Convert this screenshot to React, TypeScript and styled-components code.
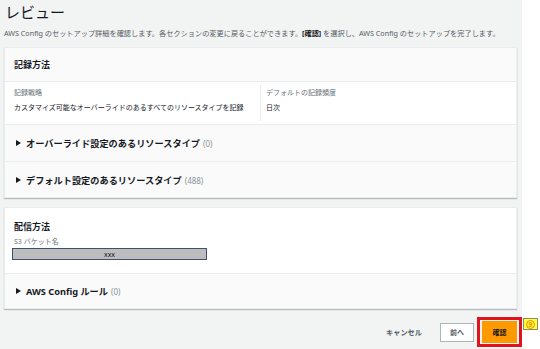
import React from 'react';
import styled, { createGlobalStyle } from 'styled-components';

const GlobalStyle = createGlobalStyle`
  html, body {
    margin: 0;
    padding: 0;
    background: #ffffff;
  }
  body {
    font-family: "Noto Sans", "Noto Sans CJK JP", sans-serif;
    color: #16191f;
  }
`;

const Page = styled.div`
  display: flex;
  width: 540px;
  height: 349px;
  overflow: hidden;
`;

const Main = styled.div`
  width: 522px;
  height: 349px;
  background: #f2f3f3;
  padding: 0 5px 0 4px;
  box-sizing: border-box;
`;

const Title = styled.h1`
  margin: 0;
  padding-left: 1px;
  font-size: 15px;
  line-height: 24px;
  font-weight: 400;
  color: #16191f;
`;

const Subtitle = styled.p`
  margin: 4px 0 0;
  font-size: 7.2px;
  line-height: 10px;
  color: #545b64;
  white-space: nowrap;

  b {
    color: #16191f;
  }
`;

const Card = styled.div<{ $top: number }>`
  margin-top: ${(p) => p.$top}px;
  background: #ffffff;
  border: 1px solid #eaeded;
  box-shadow: 0 1px 1px rgba(0, 28, 36, 0.25);
`;

const CardHeader = styled.div`
  height: 33px;
  display: flex;
  align-items: center;
  padding-left: 9px;
  background: #fafafa;
  border-bottom: 1px solid #eaeded;
  font-size: 9px;
  font-weight: 700;
`;

const Columns = styled.div`
  display: grid;
  grid-template-columns: 255px 1fr;
  height: 42px;
  border-bottom: 1px solid #eaeded;
  align-items: stretch;
`;

const Column = styled.div<{ $divider?: boolean }>`
  padding: ${(p) => (p.$divider ? '3px 0 0 5px' : '6px 0 0 9px')};
  margin: ${(p) => (p.$divider ? '3px 0' : '0')};
  border-left: ${(p) => (p.$divider ? '1px solid #eaeded' : 'none')};
`;

const Label = styled.div`
  font-size: 7px;
  line-height: 10px;
  color: #687078;
`;

const Value = styled.div`
  margin-top: 5px;
  font-size: 7px;
  line-height: 10px;
  color: #16191f;
`;

const Expander = styled.div<{ $h: number; $last?: boolean }>`
  height: ${(p) => p.$h}px;
  display: flex;
  align-items: center;
  gap: 5px;
  padding-left: 11px;
  background: #fafafa;
  border-bottom: ${(p) => (p.$last ? 'none' : '1px solid #eaeded')};
`;

const ExpanderTitle = styled.span`
  font-size: 9.2px;
  font-weight: 700;
  color: #16191f;
`;

const Count = styled.span`
  font-size: 8px;
  font-weight: 400;
  color: #879596;
  margin-left: 3px;
`;

const Delivery = styled.div`
  height: 66px;
  padding: 13px 0 0 9px;
  box-sizing: border-box;
  border-bottom: 1px solid #eaeded;
`;

const DeliveryTitle = styled.div`
  font-size: 9px;
  line-height: 12px;
  font-weight: 700;
`;

const BucketLabel = styled.div`
  margin-top: 4px;
  font-size: 7px;
  line-height: 10px;
  color: #687078;
`;

const BucketBox = styled.div`
  margin: 1px 0 0 -2px;
  width: 195px;
  height: 12px;
  box-sizing: border-box;
  background: #bdbdbd;
  border: 1px solid #3e4f70;
  display: flex;
  align-items: center;
  justify-content: center;
  font-size: 7px;
  color: #16191f;
`;

const Footer = styled.div`
  margin-top: 12px;
  display: flex;
  justify-content: flex-end;
  align-items: center;
`;

const LinkButton = styled.span`
  font-size: 7.2px;
  font-weight: 700;
  color: #545b64;
  margin-right: 18px;
`;

const Button = styled.div<{ $primary?: boolean }>`
  width: ${(p) => (p.$primary ? 35 : 34)}px;
  height: ${(p) => (p.$primary ? 22 : 19)}px;
  box-sizing: border-box;
  display: flex;
  align-items: center;
  justify-content: center;
  font-size: 7px;
  font-weight: 700;
  color: ${(p) => (p.$primary ? '#16191f' : '#545b64')};
  background: ${(p) => (p.$primary ? '#ff9900' : '#ffffff')};
  border: 1px solid ${(p) => (p.$primary ? '#ff9900' : '#aab7b8')};
`;

const Highlight = styled.div`
  position: relative;
  margin-left: 8px;

  &::after {
    content: '';
    position: absolute;
    left: -5px;
    top: -4px;
    right: -5px;
    bottom: -4px;
    border: 3px solid #e0141e;
  }
`;

const Badge = styled.div`
  position: absolute;
  left: 41px;
  top: -3px;
  width: 15px;
  height: 12px;
  box-sizing: border-box;
  background: #ffff3c;
  border: 1px solid #8a8a6a;
  display: flex;
  align-items: center;
  justify-content: center;
`;

const BadgeNum = styled.span`
  width: 9px;
  height: 9px;
  box-sizing: border-box;
  border: 1px solid #f08a00;
  border-radius: 50%;
  display: flex;
  align-items: center;
  justify-content: center;
  font-family: "Liberation Sans", sans-serif;
  font-size: 7px;
  line-height: 7px;
  font-weight: 700;
  color: #f08a00;
`;

const Side = styled.div`
  flex: 1;
  background: #ffffff;
`;

const Caret = () => (
  <svg width="5" height="6" viewBox="0 0 5 6">
    <polygon points="0,0 5,3 0,6" fill="#16191f" />
  </svg>
);

const App: React.FC = () => {
  return (
    <>
      <GlobalStyle />
      <Page>
        <Main>
          <Title>レビュー</Title>
          <Subtitle>
            AWS Config のセットアップ詳細を確認します。各セクションの変更に戻ることができます。<b>[確認]</b> を選択し、AWS Config のセットアップを完了します。
          </Subtitle>

          <Card $top={9}>
            <CardHeader>記録方法</CardHeader>
            <Columns>
              <Column>
                <Label>記録戦略</Label>
                <Value>カスタマイズ可能なオーバーライドのあるすべてのリソースタイプを記録</Value>
              </Column>
              <Column $divider>
                <Label>デフォルトの記録頻度</Label>
                <Value>日次</Value>
              </Column>
            </Columns>
            <Expander $h={36}>
              <Caret />
              <ExpanderTitle>
                オーバーライド設定のあるリソースタイプ<Count>(0)</Count>
              </ExpanderTitle>
            </Expander>
            <Expander $h={35} $last>
              <Caret />
              <ExpanderTitle>
                デフォルト設定のあるリソースタイプ<Count>(488)</Count>
              </ExpanderTitle>
            </Expander>
          </Card>

          <Card $top={9}>
            <Delivery>
              <DeliveryTitle>配信方法</DeliveryTitle>
              <BucketLabel>S3 バケット名</BucketLabel>
              <BucketBox>xxx</BucketBox>
            </Delivery>
            <Expander $h={34} $last>
              <Caret />
              <ExpanderTitle>
                AWS Config ルール<Count>(0)</Count>
              </ExpanderTitle>
            </Expander>
          </Card>

          <Footer>
            <LinkButton>キャンセル</LinkButton>
            <Button>前へ</Button>
            <Highlight>
              <Button $primary>確認</Button>
              <Badge>
                <BadgeNum>9</BadgeNum>
              </Badge>
            </Highlight>
          </Footer>
        </Main>
        <Side />
      </Page>
    </>
  );
};

export default App;
